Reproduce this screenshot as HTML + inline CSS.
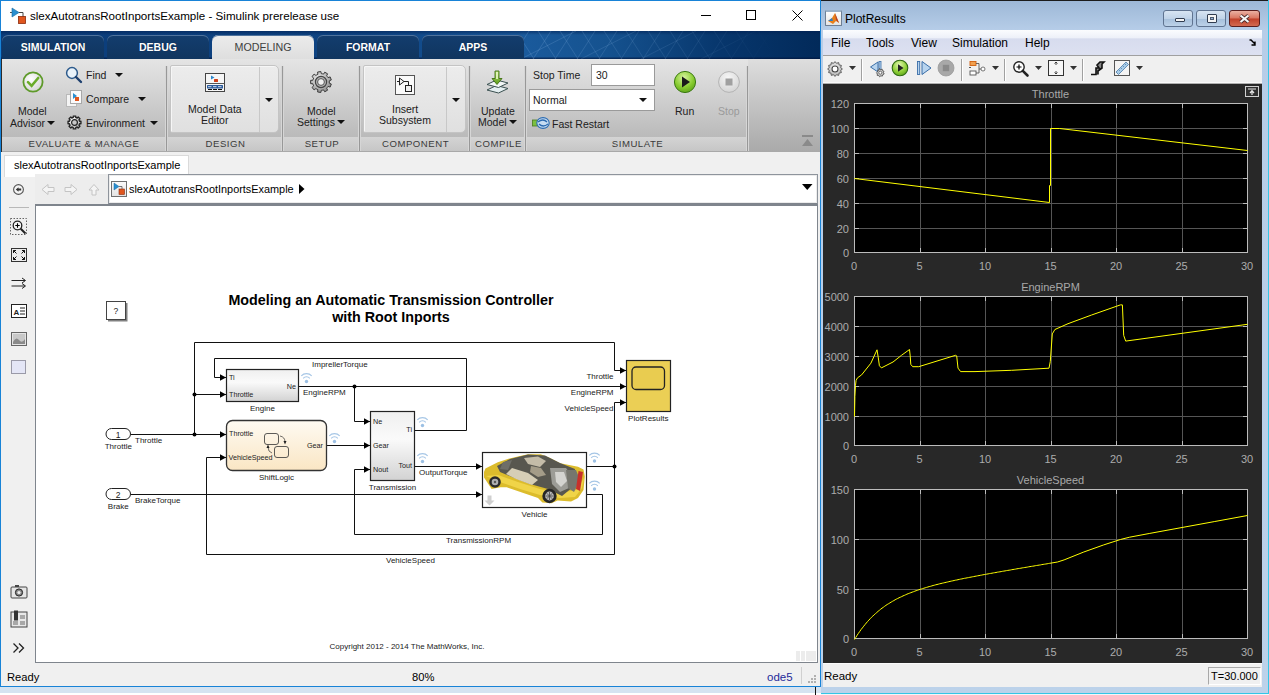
<!DOCTYPE html>
<html><head><meta charset="utf-8">
<style>
*{margin:0;padding:0;box-sizing:border-box}
html,body{width:1269px;height:695px;overflow:hidden;background:#fff;font-family:"Liberation Sans",sans-serif;color:#000}
.a{position:absolute}
#lw{position:absolute;left:0;top:0;width:821px;height:687px;border:1px solid #1883d7;background:#f0f0f0;overflow:hidden}
#rw{position:absolute;left:821px;top:0;width:448px;height:695px;overflow:hidden}
.tab{position:absolute;top:4px;width:102px;height:24px;border-radius:6px 6px 0 0;background:linear-gradient(#133d6e,#10355f);box-shadow:inset 0 1px 0 #4f729c;color:#fff;font-weight:bold;font-size:10.5px;text-align:center;line-height:25px;text-shadow:0 0 1px #0a2040}
.lbl{position:absolute;top:78px;height:13px;font-size:9.6px;letter-spacing:0.52px;color:#3a3a3a;text-align:center;line-height:13px}
.sep{position:absolute;top:7px;width:1px;height:85px;background:#989898;box-shadow:-1px 0 0 #d6d6d6,1px 0 0 #d6d6d6}
.t{position:absolute;font-size:10.5px;color:#202020;white-space:nowrap;line-height:12px}
.dd{display:inline-block;width:0;height:0;border-left:4px solid transparent;border-right:4px solid transparent;border-top:4px solid #111;vertical-align:middle}
svg text{font-family:"Liberation Sans",sans-serif}
</style></head><body>

<!-- ================= LEFT WINDOW ================= -->
<div id="lw">
  <!-- title bar -->
  <div class="a" style="left:0;top:0;width:819px;height:30px;background:#fff"></div>
  <svg class="a" style="left:8px;top:6px" width="18" height="18" viewBox="0 0 18 18">
    <path d="M1,5.5 H5" stroke="#555" stroke-width="1"/>
    <path d="M3,1 L3,10 L10,5.5 Z" fill="#2a8fd0" stroke="#1a6aa0" stroke-width="0.6"/>
    <path d="M10,5.5 H14 V10" stroke="#444" fill="none" stroke-width="1"/>
    <rect x="9.5" y="9.5" width="7" height="7" fill="#e0561e" stroke="#8a2a0a" stroke-width="0.8"/>
  </svg>
  <div class="a" style="left:29px;top:8px;font-size:11.6px;color:#000;white-space:nowrap">slexAutotransRootInportsExample - Simulink prerelease use</div>
  <!-- window buttons -->
  <div class="a" style="left:700px;top:14px;width:10px;height:1px;background:#000"></div>
  <div class="a" style="left:745px;top:9px;width:10px;height:10px;border:1px solid #000"></div>
  <svg class="a" style="left:791px;top:9px" width="11" height="11"><path d="M0.5,0.5 L10.5,10.5 M10.5,0.5 L0.5,10.5" stroke="#000" stroke-width="1"/></svg>

  <!-- ribbon tab band -->
  <div class="a" style="left:0;top:30px;width:819px;height:28px;background:linear-gradient(rgba(0,30,80,0.55),rgba(0,30,80,0) 4px,rgba(0,0,0,0) 26px,rgba(0,20,60,0.6) 27px),linear-gradient(90deg,#0b3c79 0%,#0e4483 45%,#1a5a9c 64%,#15528f 74%,#07366c 88%,#022a5a 100%)">
    <svg class="a" style="left:520px;top:0" width="300" height="28">
      <defs><linearGradient id="latf" x1="0" y1="0" x2="1" y2="0"><stop offset="0" stop-color="#9cc4ef" stop-opacity="0.22"/><stop offset="0.55" stop-color="#9cc4ef" stop-opacity="0.12"/><stop offset="0.85" stop-color="#9cc4ef" stop-opacity="0"/></linearGradient></defs>
      <path d="M-10,28 L8,0 M-5,0 L13,28 M12,28 L30,0 M17,0 L35,28 M34,28 L52,0 M39,0 L57,28 M56,28 L74,0 M61,0 L79,28 M78,28 L96,0 M83,0 L101,28 M100,28 L118,0 M105,0 L123,28 M122,28 L140,0 M127,0 L145,28 M144,28 L162,0 M149,0 L167,28 M166,28 L184,0 M171,0 L189,28 M188,28 L206,0 M193,0 L211,28 M210,28 L228,0 M215,0 L233,28 M232,28 L250,0 M237,0 L255,28 M254,28 L272,0 M259,0 L277,28 M276,28 L294,0 M281,0 L299,28 M0,28 L55,0 M60,28 L115,0 M120,28 L175,0 M180,28 L235,0 M240,28 L295,0" stroke="url(#latf)" stroke-width="0.9" fill="none"/>
    </svg>
    <div class="tab" style="left:1px">SIMULATION</div>
    <div class="tab" style="left:106px">DEBUG</div>
    <div class="tab" style="left:211px;background:linear-gradient(#ececec,#dedede);border-color:#e8e8e8;color:#404040;font-weight:normal;text-shadow:none;font-size:10.7px">MODELING</div>
    <div class="tab" style="left:316px">FORMAT</div>
    <div class="tab" style="left:421px">APPS</div>
  </div>

  <!-- toolstrip -->
  <div class="a" id="ts" style="left:0;top:58px;width:819px;height:93px;background:linear-gradient(#e4e4e4,#d6d6d6 30%,#bababa 84%,#b4b4b4)">
    <!-- label band -->
    <div class="a" style="left:0;top:78px;width:746px;height:14px;background:linear-gradient(#d4d4d4,#c6c6c6)"></div>
    <div class="a" style="left:747px;top:0;width:72px;height:92px;background:linear-gradient(#dedede,#cbcbcb 35%,#b4b4b4 80%,#aaaaaa)"></div>
    <div class="a" style="left:0;top:92px;width:819px;height:1px;background:#a9a9a9"></div>
    <div class="sep" style="left:165px"></div>
    <div class="sep" style="left:281px"></div>
    <div class="sep" style="left:358px"></div>
    <div class="sep" style="left:468px"></div>
    <div class="sep" style="left:524px"></div>
    <div class="sep" style="left:746px"></div>
    <div class="lbl" style="left:0;width:166px">EVALUATE &amp; MANAGE</div>
    <div class="lbl" style="left:167px;width:115px">DESIGN</div>
    <div class="lbl" style="left:283px;width:76px">SETUP</div>
    <div class="lbl" style="left:360px;width:109px">COMPONENT</div>
    <div class="lbl" style="left:470px;width:55px">COMPILE</div>
    <div class="lbl" style="left:526px;width:221px">SIMULATE</div>
    <div class="a" style="left:-1px;top:-59px;width:821px;height:160px">
  <!-- Model Advisor -->
  <svg class="a" style="left:21px;top:70px" width="24" height="24" viewBox="0 0 24 24">
    <defs><radialGradient id="gChk" cx="0.4" cy="0.35" r="0.7"><stop offset="0" stop-color="#ffffff"/><stop offset="1" stop-color="#d4d4d4"/></radialGradient></defs>
    <circle cx="12" cy="12" r="9.6" fill="url(#gChk)" stroke="#5e9a2a" stroke-width="1.8"/>
    <path d="M7,12.2 L10.6,15.8 L17.2,8" stroke="#6aac2a" stroke-width="2.6" fill="none" stroke-linecap="round"/>
  </svg>
  <div class="t" style="left:18px;top:105px">Model</div>
  <div class="t" style="left:10px;top:117px">Advisor</div>
  <div class="a dd" style="left:47px;top:121px"></div>
  <!-- Find -->
  <svg class="a" style="left:65px;top:66px" width="18" height="18" viewBox="0 0 18 18">
    <circle cx="7" cy="7" r="5.4" fill="#e9f2fa" stroke="#2c5a8c" stroke-width="1.5"/>
    <path d="M11,11 L16,16" stroke="#1d3f6e" stroke-width="2.4" stroke-linecap="round"/>
  </svg>
  <div class="t" style="left:86px;top:69px">Find</div>
  <div class="a dd" style="left:115px;top:73px"></div>
  <!-- Compare -->
  <svg class="a" style="left:66px;top:90px" width="18" height="18" viewBox="0 0 18 18">
    <rect x="0.5" y="4.5" width="10" height="12" fill="#f4f4f4" stroke="#b9b9b9"/>
    <rect x="4.5" y="0.5" width="11" height="13" fill="#fafafa" stroke="#a8a8a8"/>
    <path d="M7,3 L7,9 L11,6 Z" fill="#2a8fd0"/><rect x="9" y="7" width="4" height="4" fill="#e0561e"/>
  </svg>
  <div class="t" style="left:86px;top:93px">Compare</div>
  <div class="a dd" style="left:138px;top:97px"></div>
  <!-- Environment -->
  <svg class="a" style="left:66.5px;top:115px" width="15" height="15" viewBox="0 0 15 15">
    <defs><radialGradient id="gEnv" cx="0.35" cy="0.3" r="0.8"><stop offset="0" stop-color="#ffffff"/><stop offset="1" stop-color="#a8a8a8"/></radialGradient></defs>
    <path d="M6.25,2.45 L6.21,1.03 L8.79,1.03 L8.75,2.45 L10.18,3.05 L11.17,2.01 L12.99,3.83 L11.95,4.82 L12.55,6.25 L13.97,6.21 L13.97,8.79 L12.55,8.75 L11.95,10.18 L12.99,11.17 L11.17,12.99 L10.18,11.95 L8.75,12.55 L8.79,13.97 L6.21,13.97 L6.25,12.55 L4.82,11.95 L3.83,12.99 L2.01,11.17 L3.05,10.18 L2.45,8.75 L1.03,8.79 L1.03,6.21 L2.45,6.25 L3.05,4.82 L2.01,3.83 L3.83,2.01 L4.82,3.05 Z" fill="url(#gEnv)" stroke="#222" stroke-width="1.3" stroke-linejoin="round"/>
    <circle cx="7.5" cy="7.5" r="2.9" fill="#c8c8c8" stroke="#222" stroke-width="1.2"/>
  </svg>
  <div class="t" style="left:86px;top:117px">Environment</div>
  <div class="a dd" style="left:150px;top:121px"></div>

  <!-- Model Data Editor -->
  <div class="a" style="left:170px;top:65px;width:109px;height:68px;border:1px solid #c4c4c4;border-radius:2px 5px 5px 2px;background:linear-gradient(#ececec,#e0e0e0);box-shadow:inset 1px 1px 0 #f6f6f6"></div>
  <div class="a" style="left:259px;top:67px;width:1px;height:65px;background:#c8c8c8"></div>
  <svg class="a" style="left:204px;top:72px" width="22" height="22" viewBox="204 72 22 22">
    <rect x="205.5" y="73.5" width="19" height="18" fill="#f6f6f6" stroke="#444" stroke-width="1"/>
    <path d="M205.5,83.5 H224.5" stroke="#555" stroke-width="1"/>
    <path d="M211,75.5 L211,79.5 L214.5,77.5 Z" fill="#2a86cc"/>
    <rect x="214" y="79" width="4" height="3" rx="0.5" fill="#d04018"/>
    <rect x="207" y="85" width="16" height="3.5" rx="0.6" fill="#2a5a9a"/>
    <path d="M208,86.7 H211.5 M213,86.7 H216.5 M218,86.7 H221.5" stroke="#e8eef8" stroke-width="0.9"/>
    <path d="M208,89.5 H212 M213,89.5 H217 M218,89.5 H222" stroke="#111" stroke-width="1"/>
  </svg>
  <div class="t" style="left:188px;top:103px">Model Data</div>
  <div class="t" style="left:201px;top:114px">Editor</div>
  <div class="a dd" style="left:265px;top:98px"></div>

  <!-- Model Settings -->
  <svg class="a" style="left:310px;top:71px" width="22" height="22" viewBox="0 0 22 22">
    <defs><radialGradient id="gGear" cx="0.4" cy="0.35" r="0.7"><stop offset="0" stop-color="#f2f2f2"/><stop offset="1" stop-color="#8a8a8a"/></radialGradient></defs>
    <path d="M19.30,11.00 L19.22,12.13 L21.31,13.00 L20.18,16.09 L18.02,15.42 L17.36,16.34 L16.58,17.15 L17.61,19.16 L14.76,20.80 L13.54,18.90 L12.44,19.17 L11.32,19.29 L10.82,21.50 L7.58,20.93 L7.86,18.68 L6.85,18.19 L5.91,17.56 L4.11,18.92 L2.00,16.41 L3.66,14.87 L3.20,13.84 L2.89,12.75 L0.63,12.64 L0.63,9.36 L2.89,9.25 L3.20,8.16 L3.66,7.13 L2.00,5.59 L4.11,3.08 L5.91,4.44 L6.85,3.81 L7.86,3.32 L7.58,1.07 L10.82,0.50 L11.32,2.71 L12.44,2.83 L13.54,3.10 L14.76,1.20 L17.61,2.84 L16.58,4.85 L17.36,5.66 L18.02,6.58 L20.18,5.91 L21.31,9.00 L19.22,9.87 Z" fill="url(#gGear)" stroke="#3c3c3c" stroke-width="1"/>
    <circle cx="11" cy="11" r="5.6" fill="#b0b0b0" stroke="#444" stroke-width="1.2"/>
    <circle cx="11" cy="11" r="3.4" fill="#f0f0f0" stroke="#555" stroke-width="1"/>
  </svg>
  <div class="t" style="left:307px;top:105px">Model</div>
  <div class="t" style="left:297px;top:116px">Settings</div>
  <div class="a dd" style="left:337px;top:120px"></div>

  <!-- Insert Subsystem -->
  <div class="a" style="left:363px;top:65px;width:103px;height:68px;border:1px solid #c4c4c4;border-radius:2px 5px 5px 2px;background:linear-gradient(#ececec,#e0e0e0);box-shadow:inset 1px 1px 0 #f6f6f6"></div>
  <div class="a" style="left:446px;top:67px;width:1px;height:65px;background:#c8c8c8"></div>
  <svg class="a" style="left:394px;top:74px" width="22" height="22" viewBox="394 74 22 22">
    <rect x="395.5" y="75.5" width="19" height="19" fill="#fafafa" stroke="#555" stroke-width="1"/>
    <path d="M397,81.5 H399.5 M399.5,78 L399.5,85 L404,81.5 Z M404,81.5 H408.5 V85.5" fill="#f4f4f4" stroke="#222" stroke-width="1"/>
    <rect x="405.5" y="85.5" width="6" height="6" fill="#eeeeee" stroke="#222" stroke-width="1"/>
  </svg>
  <div class="t" style="left:392px;top:103px">Insert</div>
  <div class="t" style="left:379px;top:114px">Subsystem</div>
  <div class="a dd" style="left:452px;top:98px"></div>

  <!-- Update Model -->
  <svg class="a" style="left:484px;top:68px" width="28" height="28" viewBox="484 68 28 28">
    <defs><linearGradient id="gArr" x1="0" y1="0" x2="1" y2="0"><stop offset="0" stop-color="#6aa820"/><stop offset="0.5" stop-color="#e6f6b8"/><stop offset="1" stop-color="#6aa820"/></linearGradient>
    <linearGradient id="gArr2" x1="0" y1="0" x2="0" y2="1"><stop offset="0" stop-color="#b8e070"/><stop offset="1" stop-color="#5a9a18"/></linearGradient></defs>
    <path d="M487,90 L496.5,85.5 L508,88.5 L498.5,93 Z" fill="#e4eef0" stroke="#3a5050" stroke-width="1"/>
    <path d="M487,84.5 L496.5,80 L508,83 L498.5,87.5 Z" fill="#f2f6f6" stroke="#3a5050" stroke-width="1"/>
    <path d="M495,71 H499 V78.5 H502 L497,84.5 L492,78.5 H495 Z" fill="url(#gArr2)" stroke="#3e6e12" stroke-width="0.9"/>
    <rect x="496" y="72" width="2" height="7" fill="#eaf8c8" opacity="0.85"/>
  </svg>
  <div class="t" style="left:481px;top:105px">Update</div>
  <div class="t" style="left:478px;top:116px">Model</div>
  <div class="a dd" style="left:509px;top:120px"></div>

  <!-- Stop time etc -->
  <div class="t" style="left:533px;top:69px">Stop Time</div>
  <div class="a" style="left:591px;top:64px;width:64px;height:22px;background:#fff;border:1px solid #9a9a9a"></div>
  <div class="t" style="left:596px;top:69px">30</div>
  <div class="a" style="left:529px;top:89px;width:126px;height:22px;background:#fff;border:1px solid #9a9a9a"></div>
  <div class="t" style="left:533px;top:94px">Normal</div>
  <div class="a dd" style="left:639px;top:98px"></div>
  <svg class="a" style="left:532px;top:116px" width="18" height="15" viewBox="0 0 18 15">
    <rect x="0.5" y="4" width="5" height="6" fill="#7cc040" stroke="#4a7a20" stroke-width="0.8"/>
    <ellipse cx="11" cy="7" rx="6.2" ry="5.4" fill="#c6dcf2" stroke="#2a6ab0" stroke-width="1.1"/>
    <path d="M6,6 Q11,2 15,6 M16,8 Q11,12 7,8" stroke="#2a6ab0" stroke-width="1.2" fill="none"/>
  </svg>
  <div class="t" style="left:552px;top:118px">Fast Restart</div>

  <!-- Run / Stop -->
  <svg class="a" style="left:673px;top:70px" width="24" height="24" viewBox="0 0 24 24">
    <defs><radialGradient id="gRun" cx="0.45" cy="0.3" r="0.75"><stop offset="0" stop-color="#d8f4a0"/><stop offset="0.6" stop-color="#88cc30"/><stop offset="1" stop-color="#5aa018"/></radialGradient></defs>
    <circle cx="12" cy="12" r="10.6" fill="url(#gRun)" stroke="#3c7a14" stroke-width="1"/>
    <path d="M9,6.5 L17,12 L9,17.5 Z" fill="#1a1a1a"/>
  </svg>
  <div class="t" style="left:675px;top:105px">Run</div>
  <svg class="a" style="left:717px;top:70px" width="24" height="24" viewBox="0 0 24 24">
    <defs><radialGradient id="gStop" cx="0.45" cy="0.3" r="0.75"><stop offset="0" stop-color="#f6f6f6"/><stop offset="1" stop-color="#d2d2d2"/></radialGradient></defs>
    <circle cx="12" cy="12" r="10.4" fill="url(#gStop)" stroke="#b4b4b4" stroke-width="1"/>
    <rect x="8.5" y="8.5" width="7" height="7" fill="#a0a0a0"/>
  </svg>
  <div class="t" style="left:718px;top:105px;color:#9a9a9a">Stop</div>
  <!-- collapse -->
  <svg class="a" style="left:802px;top:135px" width="12" height="12"><rect x="0" y="0" width="11" height="2" fill="#8a8a8a"/><path d="M0,11 L5.5,4 L11,11 Z" fill="#8a8a8a"/></svg>
</div>

  </div>

  <div class="a" style="left:0;top:58px;width:1px;height:93px;background:#2a2a2a"></div>
  <!-- model tab row -->
  <div class="a" style="left:3px;top:154px;width:185px;height:22px;background:#fff;border:1px solid #dadada;border-bottom:none"></div>
  <div class="a" style="left:13px;top:158px;font-size:11px;color:#000;white-space:nowrap">slexAutotransRootInportsExample</div>

  <!-- nav / address bar -->
  <div class="a" style="left:107px;top:173px;width:710px;height:31px;background:#fff;border:1px solid #8e949c;border-bottom:2px solid #7e848c;box-shadow:inset 0 0 0 1px #ececec"></div>
  <div class="a" style="left:-1px;top:-1px;width:821px;height:687px">
  <!-- left sidebar line under back button -->
  <div class="a" style="left:35px;top:174px;width:73px;height:30px;background:#ededed"></div>
  <svg class="a" style="left:11px;top:182px" width="15" height="15" viewBox="0 0 15 15">
    <circle cx="7.5" cy="7.5" r="4.9" fill="#f4f4f4" stroke="#555" stroke-width="1.1"/>
    <path d="M4.8,7.5 L7.5,5.2 L7.5,6.6 L10.2,6.6 L10.2,8.4 L7.5,8.4 L7.5,9.8 Z" fill="#333"/>
  </svg>
  <div class="a" style="left:9px;top:207px;width:20px;height:1px;background:#b8b8b8"></div>
  <!-- nav arrows (disabled) -->
  <svg class="a" style="left:40px;top:183px" width="64" height="13" viewBox="0 0 64 13">
    <path d="M2,6.5 L8,1.5 L8,4.5 L14,4.5 L14,8.5 L8,8.5 L8,11.5 Z" fill="#f4f4f4" stroke="#c4c4c4" stroke-width="1"/>
    <path d="M37,6.5 L31,1.5 L31,4.5 L25,4.5 L25,8.5 L31,8.5 L31,11.5 Z" fill="#f4f4f4" stroke="#c4c4c4" stroke-width="1"/>
    <path d="M54,1.5 L59,7 L56,7 L56,12 L52,12 L52,7 L49,7 Z" fill="#f4f4f4" stroke="#c4c4c4" stroke-width="1"/>
  </svg>
  <!-- address -->
  <div class="a" style="left:111px;top:181px;width:16px;height:16px;border:1px solid #707070;background:linear-gradient(#fafafa,#e4e4e4)"></div>
  <svg class="a" style="left:112px;top:182px" width="14" height="14" viewBox="0 0 14 14"><path d="M2,1 L2,8 L7,4.5 Z" fill="#2a8fd0" stroke="#1a6aa0" stroke-width="0.5"/><path d="M7,4.5 H10 V7" stroke="#555" stroke-width="0.8" fill="none"/><rect x="7" y="7" width="5.5" height="5.5" fill="#e0561e" stroke="#8a2a0a" stroke-width="0.6"/></svg>
  <div class="a" style="left:129px;top:183px;font-size:10.9px;white-space:nowrap;color:#000">slexAutotransRootInportsExample</div>
  <svg class="a" style="left:299px;top:184px" width="6" height="10"><path d="M0,0 L5.5,5 L0,10 Z" fill="#000"/></svg>
  <svg class="a" style="left:802px;top:184px" width="11" height="7"><path d="M0,0 L10.5,0 L5.25,6 Z" fill="#000"/></svg>

  <!-- sidebar tools -->
  <svg class="a" style="left:10px;top:218px" width="18" height="18" viewBox="0 0 18 18">
    <rect x="0.5" y="0.5" width="16" height="16" fill="none" stroke="#555" stroke-dasharray="1.5,1.5" stroke-width="0.9"/>
    <circle cx="7.5" cy="7.5" r="4.3" fill="#f6f6f6" stroke="#222" stroke-width="1.3"/>
    <path d="M5.3,7.5 H9.7 M7.5,5.3 V9.7" stroke="#000" stroke-width="1.1"/>
    <path d="M10.7,10.7 L15.5,15.5" stroke="#222" stroke-width="2"/>
  </svg>
  <svg class="a" style="left:10px;top:247px" width="18" height="16" viewBox="0 0 18 16">
    <rect x="1.5" y="1.5" width="15" height="13" fill="#ececec" stroke="#333" stroke-width="1"/>
    <path d="M3.5,3.5 L6.5,6.5 M3.5,3.5 H6 M3.5,3.5 V6 M14.5,3.5 L11.5,6.5 M14.5,3.5 H12 M14.5,3.5 V6 M3.5,12.5 L6.5,9.5 M3.5,12.5 H6 M3.5,12.5 V10 M14.5,12.5 L11.5,9.5 M14.5,12.5 H12 M14.5,12.5 V10" stroke="#111" stroke-width="1" fill="none"/>
  </svg>
  <svg class="a" style="left:10px;top:277px" width="18" height="12" viewBox="0 0 18 12">
    <path d="M1.5,3.5 H15 M12,1 L15.5,3.5 L12,6 M1.5,9 H15 M12,6.5 L15.5,9 L12,11.5" stroke="#222" stroke-width="1" fill="none"/>
  </svg>
  <svg class="a" style="left:11px;top:304px" width="16" height="14" viewBox="0 0 16 14">
    <rect x="0.5" y="0.5" width="15" height="13" fill="#fff" stroke="#222"/>
    <text x="2.5" y="10.5" font-size="8" font-weight="bold" fill="#222">A</text>
    <path d="M9,4 H14 M9,7 H14 M9,10 H14" stroke="#222" stroke-width="1"/>
  </svg>
  <svg class="a" style="left:11px;top:332px" width="16" height="14" viewBox="0 0 16 14">
    <rect x="0.5" y="0.5" width="15" height="13" fill="#e4e4e4" stroke="#666"/>
    <rect x="2" y="2" width="12" height="10" fill="#c8c8c8"/>
    <path d="M2,10 Q5,4 8,8 T14,7 V12 H2 Z" fill="#8a8a8a"/>
  </svg>
  <div class="a" style="left:11px;top:360px;width:15px;height:14px;background:#e4e6f6;border:1px solid #9a9aa8"></div>
  <!-- bottom sidebar tools -->
  <svg class="a" style="left:10px;top:584px" width="18" height="15" viewBox="0 0 18 15">
    <rect x="1" y="3" width="16" height="11" rx="1" fill="#e6e6e6" stroke="#444" stroke-width="1"/>
    <rect x="5" y="1" width="4" height="2" fill="#444"/>
    <circle cx="9" cy="8.5" r="3.6" fill="#888" stroke="#222" stroke-width="1"/>
    <circle cx="9" cy="8.5" r="1.6" fill="#eee"/>
  </svg>
  <svg class="a" style="left:10px;top:610px" width="18" height="18" viewBox="0 0 18 18">
    <rect x="1" y="2" width="16" height="15" fill="#e8e8e8" stroke="#444" stroke-width="1"/>
    <rect x="4" y="0.5" width="4" height="10" fill="#333"/>
    <rect x="3" y="11" width="5" height="4" fill="#a8a8a8"/><rect x="10" y="5" width="5" height="4" fill="#a8a8a8"/><rect x="10" y="11" width="5" height="4" fill="#a8a8a8"/>
  </svg>
  <svg class="a" style="left:12px;top:642px" width="14" height="12" viewBox="0 0 14 12">
    <path d="M1.5,1.5 L6,6 L1.5,10.5 M7,1.5 L11.5,6 L7,10.5" stroke="#222" stroke-width="1.3" fill="none"/>
  </svg>
  <!-- status grip -->
  <svg class="a" style="left:808px;top:675px" width="10" height="10"><g fill="#b0b0b0"><rect x="6" y="0" width="2" height="2"/><rect x="3" y="3" width="2" height="2"/><rect x="6" y="3" width="2" height="2"/><rect x="0" y="6" width="2" height="2"/><rect x="3" y="6" width="2" height="2"/><rect x="6" y="6" width="2" height="2"/></g></svg>
</div>


  <!-- canvas -->
  <div class="a" style="left:34px;top:203px;width:783px;height:459px;background:#fff;border:1px solid #7f858d;border-top:2px solid #7f858d"></div>
  <svg class="a" style="left:-1px;top:-1px" width="821" height="687" viewBox="0 0 821 687" font-size="8" fill="#222">
<defs>
  <linearGradient id="gEng" x1="0" y1="0" x2="0" y2="1"><stop offset="0" stop-color="#efefef"/><stop offset="0.4" stop-color="#fafafa"/><stop offset="1" stop-color="#d2d2d2"/></linearGradient>
  <linearGradient id="gSL" x1="0" y1="0" x2="0" y2="1"><stop offset="0" stop-color="#fefaf2"/><stop offset="1" stop-color="#fae6c4"/></linearGradient>
  <marker id="ar" markerWidth="8" markerHeight="8" refX="6.5" refY="3.5" orient="auto" markerUnits="userSpaceOnUse"><path d="M0.5,0.3 L6.5,3.5 L0.5,6.7 Z" fill="#000"/></marker>
  
</defs>
<!-- title -->
<text x="391" y="305" font-size="14.3" font-weight="bold" text-anchor="middle" fill="#000">Modeling an Automatic Transmission Controller</text>
<text x="391" y="322" font-size="14.3" font-weight="bold" text-anchor="middle" fill="#000">with Root Inports</text>
<!-- ? block -->
<rect x="108" y="303" width="19.5" height="18.5" fill="#555" opacity="0.75"/>
<rect x="106.5" y="301.5" width="19" height="18" fill="#fff" stroke="#444" stroke-width="1"/>
<text x="115.8" y="314" font-size="8.5" text-anchor="middle" fill="#222">?</text>

<g stroke="#111" stroke-width="1" fill="none">
  <!-- outer loop: throttle to plot -->
  <polyline points="194.5,434.5 194.5,342.5 614.5,342.5 614.5,370.5 626,370.5" marker-end="url(#ar)"/>
  <!-- engine throttle input -->
  <polyline points="194.5,394.5 226,394.5" marker-end="url(#ar)"/>
  <!-- impeller torque loop -->
  <polyline points="414.5,430.5 466.5,430.5 466.5,358.5 214.5,358.5 214.5,377.5 226,377.5" marker-end="url(#ar)"/>
  <!-- engine rpm -->
  <polyline points="298.5,386.5 626,386.5" marker-end="url(#ar)"/>
  <polyline points="354.5,386.5 354.5,421.5 370,421.5" marker-end="url(#ar)"/>
  <!-- throttle inport -->
  <polyline points="130.5,434.5 226,434.5" marker-end="url(#ar)"/>
  <!-- gear -->
  <polyline points="326.5,445.5 370,445.5" marker-end="url(#ar)"/>
  <!-- tout -->
  <polyline points="414.5,466.5 482,466.5" marker-end="url(#ar)"/>
  <!-- brake -->
  <polyline points="130.5,494.5 482,494.5" marker-end="url(#ar)"/>
  <!-- vehicle speed -->
  <polyline points="586.5,466.5 614.5,466.5"/>
  <polyline points="614.5,466.5 614.5,554.5 206.5,554.5 206.5,457.5 226,457.5" marker-end="url(#ar)"/>
  <polyline points="614.5,466.5 614.5,402.5 626,402.5" marker-end="url(#ar)"/>
  <!-- transmission rpm -->
  <polyline points="586.5,494.5 602.5,494.5 602.5,534.5 354.5,534.5 354.5,469.5 370,469.5" marker-end="url(#ar)"/>
</g>
<g fill="#000">
  <circle cx="194.5" cy="394.5" r="2"/><circle cx="194.5" cy="434.5" r="2"/>
  <circle cx="354.5" cy="386.5" r="2"/><circle cx="614.5" cy="466.5" r="2"/>
</g>

<!-- Engine -->
<rect x="226.5" y="369.5" width="72" height="32" fill="url(#gEng)" stroke="#222" stroke-width="1.2"/>
<g font-size="7.2" fill="#222">
<text x="229" y="380">Ti</text><text x="229" y="396.5">Throttle</text><text x="296" y="388.5" text-anchor="end">Ne</text>
</g>
<text x="262.5" y="411" text-anchor="middle">Engine</text>
<g transform="translate(306.5,381.5)"><path d="M-5.2,-5.6 A7,7 0 0 1 5.2,-5.6 M-3.3,-3.2 A4.4,4.4 0 0 1 3.3,-3.2" stroke="#a6c6e6" stroke-width="1.1" fill="none"/><circle cx="0" cy="0" r="1.7" fill="#9cc0e4"/></g>
<text x="303" y="395">EngineRPM</text>
<text x="312" y="367">ImprellerTorque</text>

<!-- Inports -->
<rect x="106" y="428.5" width="24.5" height="11" rx="5.5" fill="#fff" stroke="#222" stroke-width="1"/>
<text x="118.2" y="437.5" text-anchor="middle" font-size="8.5">1</text>
<text x="118.3" y="449" text-anchor="middle">Throttle</text>
<text x="135" y="443">Throttle</text>
<rect x="106" y="488.5" width="24.5" height="11" rx="5.5" fill="#fff" stroke="#222" stroke-width="1"/>
<text x="118.2" y="497.5" text-anchor="middle" font-size="8.5">2</text>
<text x="118.3" y="509" text-anchor="middle">Brake</text>
<text x="135" y="503">BrakeTorque</text>

<!-- ShiftLogic -->
<rect x="226.5" y="420.5" width="100" height="50" rx="6" fill="url(#gSL)" stroke="#333" stroke-width="1.3"/>
<g font-size="7.2" fill="#222">
<text x="229" y="435.5">Throttle</text><text x="228.5" y="459.5">VehicleSpeed</text><text x="323" y="447.5" text-anchor="end">Gear</text>
</g>
<rect x="264.5" y="433.5" width="14" height="11" rx="2.5" fill="none" stroke="#333" stroke-width="0.8"/>
<rect x="274.5" y="446.5" width="14" height="11" rx="2.5" fill="none" stroke="#333" stroke-width="0.8"/>
<path d="M280,436 Q285,437 285,442 M272,453 Q268,452 268,447" stroke="#333" stroke-width="0.7" fill="none"/>
<path d="M283.5,441 L286.5,441 L285,444.5 Z M266.5,448 L269.5,448 L268,444.5 Z" fill="#222"/>
<text x="276.5" y="480" text-anchor="middle">ShiftLogic</text>
<g transform="translate(334.5,441.5)"><path d="M-5.2,-5.6 A7,7 0 0 1 5.2,-5.6 M-3.3,-3.2 A4.4,4.4 0 0 1 3.3,-3.2" stroke="#a6c6e6" stroke-width="1.1" fill="none"/><circle cx="0" cy="0" r="1.7" fill="#9cc0e4"/></g>

<!-- Transmission -->
<rect x="370.5" y="411.5" width="44" height="69" fill="url(#gEng)" stroke="#222" stroke-width="1.2"/>
<g font-size="7.2" fill="#222">
<text x="373" y="423.5">Ne</text><text x="373" y="447.5">Gear</text><text x="373" y="471.5">Nout</text>
<text x="412" y="432" text-anchor="end">Ti</text><text x="412" y="468" text-anchor="end">Tout</text>
</g>
<text x="392.5" y="490" text-anchor="middle">Transmission</text>
<g transform="translate(422.5,425.5)"><path d="M-5.2,-5.6 A7,7 0 0 1 5.2,-5.6 M-3.3,-3.2 A4.4,4.4 0 0 1 3.3,-3.2" stroke="#a6c6e6" stroke-width="1.1" fill="none"/><circle cx="0" cy="0" r="1.7" fill="#9cc0e4"/></g>
<g transform="translate(422.5,461.5)"><path d="M-5.2,-5.6 A7,7 0 0 1 5.2,-5.6 M-3.3,-3.2 A4.4,4.4 0 0 1 3.3,-3.2" stroke="#a6c6e6" stroke-width="1.1" fill="none"/><circle cx="0" cy="0" r="1.7" fill="#9cc0e4"/></g>
<text x="419" y="475">OutputTorque</text>

<!-- Vehicle -->
<rect x="482.5" y="452.5" width="104" height="55" fill="#fff" stroke="#222" stroke-width="1.2"/>
<g>
  <!-- silhouette (yellow) -->
  <path d="M484,472 L485.4,468.5 L497.8,462.3 L508.5,458.7 L520,456 L528,454.2 L540.7,454.2 L549.6,457.8 L560.3,463.2 L578,466.7 L583.5,469.4 L584.8,476.5 L583.5,490 L578,498 L571,501.5 L557.6,500.6 L551.4,503.3 L542.4,502.4 L538,498 L506.8,487.3 L500.5,487.3 L491.6,489 L487,482 L484,477.4 Z" fill="#dcbc2c"/>
  <path d="M486,476 L500,482 L520,489 L540,495 L560,498 L575,497 L582,488 L584,478 L576,490 L560,493 L540,489 L518,482 L498,475 Z" fill="#f0d448"/>
  <!-- dark interior / mechanics -->
  <path d="M497,466 L510,459 L528,454.5 L545,455.5 L560,463 L575,469 L573,487 L562,496 L548,489 L530,484 L512,477 L500,472 Z" fill="#58574f"/>
  <path d="M512,468 L528,473 L538,480 L532,485 L516,479 L506,474 Z" fill="#d6ceb6"/>
  <path d="M524,458 L538,456.5 L546,461 L540,467 L528,464 Z" fill="#c4bca8"/>
  <path d="M531,466 L541,468 L546,475 L538,477 L530,472 Z" fill="#a49c88"/>
  <path d="M550,468 L566,468 L572,476 L569,488 L560,492 L552,484 Z" fill="#9c9c96"/>
  <path d="M555,472 L564,472 L567,481 L561,487 L556,482 Z" fill="#d4d4d0"/>
  <path d="M566,470 L576,470 L580,480 L574,492 L568,488 Z" fill="#76766e"/>
  <path d="M503,462 L512,460 L508,470 L500,469 Z" fill="#6e6e68"/>
  <path d="M578.5,471 L583,472 L580,491 L576,489 Z" fill="#c8302a"/>
  <!-- wheels -->
  <circle cx="495" cy="482" r="5.8" fill="#2a2a2a"/><circle cx="495" cy="482" r="3.3" fill="#b0b0b0"/><circle cx="495" cy="482" r="1.2" fill="#555"/>
  <circle cx="549.5" cy="496" r="7.2" fill="#262626"/><circle cx="549.5" cy="496" r="4.4" fill="#b8b8b8"/><path d="M545.5,496 H553.5 M549.5,492 V500 M546.7,493.2 L552.3,498.8 M552.3,493.2 L546.7,498.8" stroke="#444" stroke-width="0.8"/>
</g>
<path d="M487.5,495.5 H491.5 V500.5 H494.5 L489.5,505.5 L484.5,500.5 H487.5 Z" fill="#cfcfcf"/>

<text x="534.5" y="517" text-anchor="middle">Vehicle</text>
<g transform="translate(594.5,461)"><path d="M-5.2,-5.6 A7,7 0 0 1 5.2,-5.6 M-3.3,-3.2 A4.4,4.4 0 0 1 3.3,-3.2" stroke="#a6c6e6" stroke-width="1.1" fill="none"/><circle cx="0" cy="0" r="1.7" fill="#9cc0e4"/></g>
<g transform="translate(594.5,489)"><path d="M-5.2,-5.6 A7,7 0 0 1 5.2,-5.6 M-3.3,-3.2 A4.4,4.4 0 0 1 3.3,-3.2" stroke="#a6c6e6" stroke-width="1.1" fill="none"/><circle cx="0" cy="0" r="1.7" fill="#9cc0e4"/></g>
<text x="446" y="543">TransmissionRPM</text>
<text x="386" y="563">VehicleSpeed</text>

<!-- PlotResults -->
<rect x="626.5" y="360.5" width="44" height="51" fill="#ebcf55" stroke="#222" stroke-width="1.2"/>
<rect x="632" y="367" width="32.5" height="22.5" rx="4" fill="#e9cc50" stroke="#222" stroke-width="1.3"/>
<text x="613.5" y="379" text-anchor="end">Throttle</text>
<text x="613.5" y="395" text-anchor="end">EngineRPM</text>
<text x="613.5" y="411" text-anchor="end">VehicleSpeed</text>
<text x="648.3" y="421" text-anchor="middle">PlotResults</text>

<text x="407" y="649" text-anchor="middle" fill="#222">Copyright 2012 - 2014 The MathWorks, Inc.</text>
<rect x="796" y="651" width="4" height="10" fill="#ececec"/><rect x="801" y="651" width="4" height="10" fill="#ececec"/><rect x="806" y="651" width="10" height="10" fill="#ececec"/>
</svg>


  <!-- status bar -->
  <div class="a" style="left:6px;top:670px;font-size:11.2px;color:#000">Ready</div>
  <div class="a" style="left:411px;top:670px;font-size:11.2px;color:#000">80%</div>
  <div class="a" style="left:766px;top:670px;font-size:11.5px;color:#1f2a9a">ode5</div>
  <div class="a" style="left:800px;top:666px;width:1px;height:17px;background:#d0d0d0"></div>
</div>

<div class="a" style="left:0;top:687px;width:821px;height:6px;background:#d5e3f1"></div>
<div class="a" style="left:815px;top:687px;width:1px;height:8px;background:#111"></div>
<!-- ================= RIGHT WINDOW ================= -->
<div id="rw">
  <div class="a" style="left:0;top:0;width:448px;height:695px;background:linear-gradient(#9cb7d6,#b6cde8 30px,#bcd2ea 100%)"></div>
  <div class="a" style="left:0;top:0;width:448px;height:1px;background:#1b1b1b"></div>
  <div class="a" style="left:447px;top:0;width:1px;height:694px;background:#34c6e6"></div>
  <div class="a" style="left:0;top:693px;width:448px;height:1px;background:#34c6e6"></div>
  <div class="a" style="left:0;top:694px;width:448px;height:1px;background:#f4f6f9"></div>
  <!-- title -->
  <div class="a" style="left:4px;top:10px;width:17px;height:16px;background:linear-gradient(#fdfdfd,#e4e4e4);border:1px solid #6e7f94;border-top:2px solid #9ab0c8;border-radius:1px"></div>
  <svg class="a" style="left:6px;top:12px" width="13" height="13" viewBox="0 0 13 13"><path d="M1,9 L5,6 L8,1 L12,11 L9,9 L6,12 Z" fill="#e8801a"/><path d="M1,9 L5,6 L6,9 Z" fill="#2d7fc7"/><path d="M8,1 L12,11 L9,8 Z" fill="#b8402a"/></svg>
  <div class="a" style="left:24px;top:12px;font-size:12px;color:#000">PlotResults</div>
  <!-- title buttons -->
  <div class="a" style="left:342px;top:10px;width:30px;height:17px;border:1px solid #5f7390;border-radius:3px;background:linear-gradient(#d7e4f2,#c0d3e8 50%,#a6bfdb 52%,#bcd1e8)"></div>
  <div class="a" style="left:354px;top:18px;width:10px;height:4px;background:#f4f4f4;border:1px solid #303c50;border-radius:1px"></div>
  <div class="a" style="left:375px;top:10px;width:30px;height:17px;border:1px solid #5f7390;border-radius:3px;background:linear-gradient(#d7e4f2,#c0d3e8 50%,#a6bfdb 52%,#bcd1e8)"></div>
  <div class="a" style="left:386px;top:14px;width:10px;height:9px;background:#f4f4f4;border:1px solid #303c50;border-radius:1px"></div>
  <div class="a" style="left:389px;top:17px;width:4px;height:3px;background:#9ab3d3;border:1px solid #4b5a70"></div>
  <div class="a" style="left:408px;top:10px;width:31px;height:17px;border:1px solid #5a1e1e;border-radius:3px;background:linear-gradient(#eab0a2,#d97560 48%,#c0402a 52%,#d36a50)"></div>
  <svg class="a" style="left:416px;top:12px" width="15" height="13"><path d="M3.5,3.5 L11.5,10 M11.5,3.5 L3.5,10" stroke="#4a2a2a" stroke-width="3.8"/><path d="M3.5,3.5 L11.5,10 M11.5,3.5 L3.5,10" stroke="#f6f6f6" stroke-width="2.2"/></svg>
  <!-- menu bar -->
  <div class="a" style="left:2px;top:30px;width:439px;height:25px;background:linear-gradient(#fbfcfe,#eef1f9 30%,#d7dcee 36%,#dde1f1)"></div>
  <div class="a" style="left:2px;top:55px;width:439px;height:1px;background:#a0a0a0"></div>
  <div class="a" style="left:10px;top:36px;font-size:12px;color:#000">File</div>
  <div class="a" style="left:45px;top:36px;font-size:12px;color:#000">Tools</div>
  <div class="a" style="left:90px;top:36px;font-size:12px;color:#000">View</div>
  <div class="a" style="left:131px;top:36px;font-size:12px;color:#000">Simulation</div>
  <div class="a" style="left:204px;top:36px;font-size:12px;color:#000">Help</div>
  <svg class="a" style="left:428px;top:39px" width="8" height="8"><path d="M0.5,1 L2,1 L6,5 M6,2.5 L6,6 L2.5,6" stroke="#000" stroke-width="1.4" fill="none"/></svg>
  <!-- toolbar -->
  <div class="a" style="left:2px;top:56px;width:439px;height:27px;background:#f0f0f0"></div>
  <div class="a" style="left:2px;top:82px;width:439px;height:1px;background:#fafafa"></div><div class="a" style="left:2px;top:83px;width:439px;height:1px;background:#b0b0b0"></div>
  <div class="a" style="left:-821px;top:0;width:1269px;height:100px">
  <!-- gear -->
  <svg class="a" style="left:827px;top:61px" width="16" height="16" viewBox="0 0 16 16">
    <defs><radialGradient id="gG2" cx="0.5" cy="0.4" r="0.6"><stop offset="0" stop-color="#fafafa"/><stop offset="1" stop-color="#a8a8a8"/></radialGradient></defs>
    <path d="M8,0.6 L9.5,2.3 L11.7,1.6 L12.1,3.9 L14.4,4.4 L13.7,6.6 L15.4,8 L13.7,9.4 L14.4,11.6 L12.1,12.1 L11.7,14.4 L9.5,13.7 L8,15.4 L6.5,13.7 L4.3,14.4 L3.9,12.1 L1.6,11.6 L2.3,9.4 L0.6,8 L2.3,6.6 L1.6,4.4 L3.9,3.9 L4.3,1.6 L6.5,2.3 Z" fill="url(#gG2)" stroke="#555" stroke-width="0.9"/>
    <circle cx="8" cy="8" r="3" fill="#fff" stroke="#444" stroke-width="1.1"/>
  </svg>
  <svg class="a" style="left:849px;top:66px" width="7" height="4"><path d="M0,0 H7 L3.5,4 Z" fill="#333"/></svg>
  <div class="a" style="left:861px;top:59px;width:1px;height:22px;background:#a0a0a0;box-shadow:1px 0 0 #fff"></div>
  <!-- step back -->
  <svg class="a" style="left:869px;top:60px" width="18" height="18" viewBox="0 0 18 18">
    <path d="M1.5,7 L9,2 L9,12 Z" fill="#b8d4ee" stroke="#3a6ea8" stroke-width="1"/>
    <rect x="10" y="1.5" width="2" height="8" fill="#b8d4ee" stroke="#3a6ea8" stroke-width="0.8"/>
    <path d="M10.5,8.5 L11.7,9.6 L13.2,9.2 L13.6,10.7 L15,11.3 L14.4,12.7 L15.2,14 L13.8,14.6 L13.4,16.1 L11.9,15.8 L10.6,16.8 L9.7,15.5 L8.2,15.4 L8.4,13.9 L7.4,12.8 L8.6,11.8 L8.6,10.3 L10,10.2 Z" fill="#c8c8c8" stroke="#444" stroke-width="0.8"/>
    <circle cx="11.3" cy="12.7" r="1.5" fill="#fff" stroke="#444" stroke-width="0.7"/>
  </svg>
  <!-- run -->
  <svg class="a" style="left:891px;top:59px" width="18" height="18" viewBox="0 0 18 18">
    <defs><radialGradient id="gR2" cx="0.45" cy="0.3" r="0.75"><stop offset="0" stop-color="#e4f8b4"/><stop offset="0.6" stop-color="#8fd038"/><stop offset="1" stop-color="#5aa018"/></radialGradient></defs>
    <circle cx="9" cy="9" r="7.8" fill="url(#gR2)" stroke="#2e6a10" stroke-width="1.1"/>
    <path d="M7,5.2 L12.5,9 L7,12.8 Z" fill="#222"/>
  </svg>
  <!-- step forward -->
  <svg class="a" style="left:916px;top:60px" width="16" height="16" viewBox="0 0 16 16">
    <rect x="1.5" y="1.5" width="2.2" height="13" fill="#b8d4ee" stroke="#3a6ea8" stroke-width="0.9"/>
    <path d="M6,1.5 L15,8 L6,14.5 Z" fill="#b8d4ee" stroke="#3a6ea8" stroke-width="1"/>
  </svg>
  <!-- stop -->
  <svg class="a" style="left:937px;top:59px" width="18" height="18" viewBox="0 0 18 18">
    <circle cx="9" cy="9" r="8" fill="#a8a8a8" stroke="#9a9a9a" stroke-width="0.8"/>
    <rect x="5.8" y="5.8" width="6.4" height="6.4" fill="#8a8a8a"/>
  </svg>
  <div class="a" style="left:961px;top:59px;width:1px;height:22px;background:#a0a0a0;box-shadow:1px 0 0 #fff"></div>
  <!-- signal selector -->
  <svg class="a" style="left:969px;top:60px" width="18" height="18" viewBox="0 0 18 18">
    <rect x="1" y="1.5" width="6" height="4" fill="#f0a050" stroke="#d06010" stroke-width="0.9"/>
    <path d="M7,3.5 H10 V9 H12 M10,9 V13 H7" stroke="#555" stroke-width="0.9" fill="none"/>
    <circle cx="14" cy="9" r="2" fill="#fff" stroke="#555" stroke-width="0.8"/>
    <rect x="1" y="11" width="6" height="4" fill="#fff" stroke="#555" stroke-width="0.9"/>
    <path d="M0,7.5 H2" stroke="#555"/>
  </svg>
  <svg class="a" style="left:992px;top:66px" width="7" height="4"><path d="M0,0 H7 L3.5,4 Z" fill="#333"/></svg>
  <div class="a" style="left:1004px;top:59px;width:1px;height:22px;background:#a0a0a0;box-shadow:1px 0 0 #fff"></div>
  <!-- zoom -->
  <svg class="a" style="left:1012px;top:60px" width="18" height="18" viewBox="0 0 18 18">
    <circle cx="7" cy="7" r="5.2" fill="#fff" stroke="#222" stroke-width="1.4"/>
    <path d="M4.5,7 H9.5 M7,4.5 V9.5" stroke="#000" stroke-width="1.2"/>
    <path d="M10.8,10.8 L15.5,15.5" stroke="#222" stroke-width="2.6" stroke-linecap="round"/>
  </svg>
  <svg class="a" style="left:1035px;top:66px" width="7" height="4"><path d="M0,0 H7 L3.5,4 Z" fill="#333"/></svg>
  <!-- scale -->
  <svg class="a" style="left:1048px;top:60px" width="17" height="17" viewBox="0 0 17 17">
    <rect x="0.5" y="0.5" width="15" height="15" fill="#f6f6f6" stroke="#333"/>
    <path d="M8,2 V5 M6.5,3.5 L8,2 L9.5,3.5 M8,14 V11 M6.5,12.5 L8,14 L9.5,12.5" stroke="#333" stroke-width="0.9" fill="none"/>
  </svg>
  <svg class="a" style="left:1070px;top:66px" width="7" height="4"><path d="M0,0 H7 L3.5,4 Z" fill="#333"/></svg>
  <div class="a" style="left:1082px;top:59px;width:1px;height:22px;background:#a0a0a0;box-shadow:1px 0 0 #fff"></div>
  <!-- step icon -->
  <svg class="a" style="left:1090px;top:60px" width="16" height="16" viewBox="0 0 16 16">
    <path d="M1,14.5 H6 V8 L9,8 L7,5 L10,2 H14 L12,4 L12,8 L8,11 V14.5" stroke="#111" stroke-width="1.6" fill="#888"/>
  </svg>
  <!-- ruler -->
  <svg class="a" style="left:1114px;top:60px" width="17" height="17" viewBox="0 0 17 17">
    <rect x="0.5" y="0.5" width="15" height="15" fill="#f4f4f4" stroke="#555"/>
    <path d="M2,12 L12,2 L14.5,4.5 L4.5,14.5 Z" fill="#a8cce8" stroke="#4a7aa8" stroke-width="0.8"/>
    <path d="M5,10 L6,11 M7,8 L8,9 M9,6 L10,7 M11,4 L12,5" stroke="#4a7aa8" stroke-width="0.7"/>
  </svg>
  <svg class="a" style="left:1136px;top:66px" width="7" height="4"><path d="M0,0 H7 L3.5,4 Z" fill="#333"/></svg>
</div>

  <!-- dark panel -->
  <div class="a" style="left:2px;top:84px;width:439px;height:579px;background:#282828"></div>
  <div class="a" style="left:424px;top:86px;width:14px;height:11px;border:1px solid #d0d0d0;background:#303030"></div>
  <svg class="a" style="left:426px;top:88px" width="10" height="8"><path d="M1,1 H9 M5,7 V3 M3,5 L5,2.6 L7,5" stroke="#e8e8e8" stroke-width="1.2" fill="none"/></svg>
  <!-- status bar -->
  <div class="a" style="left:2px;top:663px;width:439px;height:1px;background:#fafafa"></div>
  <div class="a" style="left:2px;top:664px;width:439px;height:23px;background:#f0f0f0"></div>
  <div class="a" style="left:3px;top:670px;font-size:11.5px;color:#000">Ready</div>
  <div class="a" style="left:387px;top:667px;width:53px;height:18px;border:1px solid #a8a8a8;border-right-color:#fff;border-bottom-color:#fff;background:#f0f0f0"></div>
  <div class="a" style="left:390px;top:670px;font-size:11px;color:#000">T=30.000</div>
  <svg class="a" style="left:-821px;top:0" width="1269" height="695" font-size="11" fill="#acacac">
  <rect x="854.5" y="103.5" width="393" height="149" fill="#000" stroke="#bcbcbc" stroke-width="1"/>
<line x1="920.5" y1="104" x2="920.5" y2="252" stroke="#555"/>
<line x1="920.5" y1="248" x2="920.5" y2="252" stroke="#bcbcbc"/>
<line x1="920.5" y1="104" x2="920.5" y2="108" stroke="#bcbcbc"/>
<line x1="985.5" y1="104" x2="985.5" y2="252" stroke="#555"/>
<line x1="985.5" y1="248" x2="985.5" y2="252" stroke="#bcbcbc"/>
<line x1="985.5" y1="104" x2="985.5" y2="108" stroke="#bcbcbc"/>
<line x1="1051.5" y1="104" x2="1051.5" y2="252" stroke="#555"/>
<line x1="1051.5" y1="248" x2="1051.5" y2="252" stroke="#bcbcbc"/>
<line x1="1051.5" y1="104" x2="1051.5" y2="108" stroke="#bcbcbc"/>
<line x1="1116.5" y1="104" x2="1116.5" y2="252" stroke="#555"/>
<line x1="1116.5" y1="248" x2="1116.5" y2="252" stroke="#bcbcbc"/>
<line x1="1116.5" y1="104" x2="1116.5" y2="108" stroke="#bcbcbc"/>
<line x1="1182.5" y1="104" x2="1182.5" y2="252" stroke="#555"/>
<line x1="1182.5" y1="248" x2="1182.5" y2="252" stroke="#bcbcbc"/>
<line x1="1182.5" y1="104" x2="1182.5" y2="108" stroke="#bcbcbc"/>
<text x="849" y="257" text-anchor="end">0</text>
<line x1="855" y1="228.5" x2="1247" y2="228.5" stroke="#555"/>
<line x1="855" y1="228.5" x2="859" y2="228.5" stroke="#bcbcbc"/>
<line x1="1243" y1="228.5" x2="1247" y2="228.5" stroke="#bcbcbc"/>
<text x="849" y="233" text-anchor="end">20</text>
<line x1="855" y1="203.5" x2="1247" y2="203.5" stroke="#555"/>
<line x1="855" y1="203.5" x2="859" y2="203.5" stroke="#bcbcbc"/>
<line x1="1243" y1="203.5" x2="1247" y2="203.5" stroke="#bcbcbc"/>
<text x="849" y="208" text-anchor="end">40</text>
<line x1="855" y1="178.5" x2="1247" y2="178.5" stroke="#555"/>
<line x1="855" y1="178.5" x2="859" y2="178.5" stroke="#bcbcbc"/>
<line x1="1243" y1="178.5" x2="1247" y2="178.5" stroke="#bcbcbc"/>
<text x="849" y="183" text-anchor="end">60</text>
<line x1="855" y1="153.5" x2="1247" y2="153.5" stroke="#555"/>
<line x1="855" y1="153.5" x2="859" y2="153.5" stroke="#bcbcbc"/>
<line x1="1243" y1="153.5" x2="1247" y2="153.5" stroke="#bcbcbc"/>
<text x="849" y="158" text-anchor="end">80</text>
<line x1="855" y1="128.5" x2="1247" y2="128.5" stroke="#555"/>
<line x1="855" y1="128.5" x2="859" y2="128.5" stroke="#bcbcbc"/>
<line x1="1243" y1="128.5" x2="1247" y2="128.5" stroke="#bcbcbc"/>
<text x="849" y="133" text-anchor="end">100</text>
<text x="849" y="108" text-anchor="end">120</text>
<text x="854.0" y="270" text-anchor="middle">0</text>
<text x="919.5" y="270" text-anchor="middle">5</text>
<text x="985.0" y="270" text-anchor="middle">10</text>
<text x="1050.5" y="270" text-anchor="middle">15</text>
<text x="1116.0" y="270" text-anchor="middle">20</text>
<text x="1181.5" y="270" text-anchor="middle">25</text>
<text x="1247.0" y="270" text-anchor="middle">30</text>
<text x="1050.5" y="98" text-anchor="middle" fill="#a8a8a8">Throttle</text>
<polyline points="854.5,178.5 1049.5,202.5 1049.5,185.5 1050.5,185.5 1050.5,128.5 1059.5,128.5 1247.5,150.5" fill="none" stroke="#ffff00" stroke-width="1"/>
<rect x="854.5" y="296.5" width="393" height="149" fill="#000" stroke="#bcbcbc" stroke-width="1"/>
<line x1="920.5" y1="297" x2="920.5" y2="445" stroke="#555"/>
<line x1="920.5" y1="441" x2="920.5" y2="445" stroke="#bcbcbc"/>
<line x1="920.5" y1="297" x2="920.5" y2="301" stroke="#bcbcbc"/>
<line x1="985.5" y1="297" x2="985.5" y2="445" stroke="#555"/>
<line x1="985.5" y1="441" x2="985.5" y2="445" stroke="#bcbcbc"/>
<line x1="985.5" y1="297" x2="985.5" y2="301" stroke="#bcbcbc"/>
<line x1="1051.5" y1="297" x2="1051.5" y2="445" stroke="#555"/>
<line x1="1051.5" y1="441" x2="1051.5" y2="445" stroke="#bcbcbc"/>
<line x1="1051.5" y1="297" x2="1051.5" y2="301" stroke="#bcbcbc"/>
<line x1="1116.5" y1="297" x2="1116.5" y2="445" stroke="#555"/>
<line x1="1116.5" y1="441" x2="1116.5" y2="445" stroke="#bcbcbc"/>
<line x1="1116.5" y1="297" x2="1116.5" y2="301" stroke="#bcbcbc"/>
<line x1="1182.5" y1="297" x2="1182.5" y2="445" stroke="#555"/>
<line x1="1182.5" y1="441" x2="1182.5" y2="445" stroke="#bcbcbc"/>
<line x1="1182.5" y1="297" x2="1182.5" y2="301" stroke="#bcbcbc"/>
<text x="849" y="450" text-anchor="end">0</text>
<line x1="855" y1="416.5" x2="1247" y2="416.5" stroke="#555"/>
<line x1="855" y1="416.5" x2="859" y2="416.5" stroke="#bcbcbc"/>
<line x1="1243" y1="416.5" x2="1247" y2="416.5" stroke="#bcbcbc"/>
<text x="849" y="421" text-anchor="end">1000</text>
<line x1="855" y1="386.5" x2="1247" y2="386.5" stroke="#555"/>
<line x1="855" y1="386.5" x2="859" y2="386.5" stroke="#bcbcbc"/>
<line x1="1243" y1="386.5" x2="1247" y2="386.5" stroke="#bcbcbc"/>
<text x="849" y="391" text-anchor="end">2000</text>
<line x1="855" y1="356.5" x2="1247" y2="356.5" stroke="#555"/>
<line x1="855" y1="356.5" x2="859" y2="356.5" stroke="#bcbcbc"/>
<line x1="1243" y1="356.5" x2="1247" y2="356.5" stroke="#bcbcbc"/>
<text x="849" y="361" text-anchor="end">3000</text>
<line x1="855" y1="326.5" x2="1247" y2="326.5" stroke="#555"/>
<line x1="855" y1="326.5" x2="859" y2="326.5" stroke="#bcbcbc"/>
<line x1="1243" y1="326.5" x2="1247" y2="326.5" stroke="#bcbcbc"/>
<text x="849" y="331" text-anchor="end">4000</text>
<text x="849" y="301" text-anchor="end">5000</text>
<text x="854.0" y="463" text-anchor="middle">0</text>
<text x="919.5" y="463" text-anchor="middle">5</text>
<text x="985.0" y="463" text-anchor="middle">10</text>
<text x="1050.5" y="463" text-anchor="middle">15</text>
<text x="1116.0" y="463" text-anchor="middle">20</text>
<text x="1181.5" y="463" text-anchor="middle">25</text>
<text x="1247.0" y="463" text-anchor="middle">30</text>
<text x="1050.5" y="291" text-anchor="middle" fill="#a8a8a8">EngineRPM</text>
<polyline points="854.5,416.5 854.9,396.3 855.5,385.3 856.1,380.4 857.4,377.9 861.6,374.9 870.9,363.2 877.0,349.8 878.2,357.1 879.4,365.7 881.4,367.9 893.0,362.0 901.5,355.3 909.5,349.5 910.2,355.9 910.8,364.4 912.7,366.7 918.7,366.7 955.6,355.3 956.7,355.9 958.0,368.1 960.6,371.6 975.0,371.6 1011.7,370.3 1049.0,368.2 1050.3,361.4 1052.3,333.9 1054.9,329.5 1068.0,323.7 1091.6,315.0 1120.4,304.9 1122.4,304.9 1123.7,335.4 1125.7,341.1 1247.5,324.3" fill="none" stroke="#ffff00" stroke-width="1"/>
<rect x="854.5" y="489.5" width="393" height="149" fill="#000" stroke="#bcbcbc" stroke-width="1"/>
<line x1="920.5" y1="490" x2="920.5" y2="638" stroke="#555"/>
<line x1="920.5" y1="634" x2="920.5" y2="638" stroke="#bcbcbc"/>
<line x1="920.5" y1="490" x2="920.5" y2="494" stroke="#bcbcbc"/>
<line x1="985.5" y1="490" x2="985.5" y2="638" stroke="#555"/>
<line x1="985.5" y1="634" x2="985.5" y2="638" stroke="#bcbcbc"/>
<line x1="985.5" y1="490" x2="985.5" y2="494" stroke="#bcbcbc"/>
<line x1="1051.5" y1="490" x2="1051.5" y2="638" stroke="#555"/>
<line x1="1051.5" y1="634" x2="1051.5" y2="638" stroke="#bcbcbc"/>
<line x1="1051.5" y1="490" x2="1051.5" y2="494" stroke="#bcbcbc"/>
<line x1="1116.5" y1="490" x2="1116.5" y2="638" stroke="#555"/>
<line x1="1116.5" y1="634" x2="1116.5" y2="638" stroke="#bcbcbc"/>
<line x1="1116.5" y1="490" x2="1116.5" y2="494" stroke="#bcbcbc"/>
<line x1="1182.5" y1="490" x2="1182.5" y2="638" stroke="#555"/>
<line x1="1182.5" y1="634" x2="1182.5" y2="638" stroke="#bcbcbc"/>
<line x1="1182.5" y1="490" x2="1182.5" y2="494" stroke="#bcbcbc"/>
<text x="849" y="643" text-anchor="end">0</text>
<line x1="855" y1="589.5" x2="1247" y2="589.5" stroke="#555"/>
<line x1="855" y1="589.5" x2="859" y2="589.5" stroke="#bcbcbc"/>
<line x1="1243" y1="589.5" x2="1247" y2="589.5" stroke="#bcbcbc"/>
<text x="849" y="594" text-anchor="end">50</text>
<line x1="855" y1="539.5" x2="1247" y2="539.5" stroke="#555"/>
<line x1="855" y1="539.5" x2="859" y2="539.5" stroke="#bcbcbc"/>
<line x1="1243" y1="539.5" x2="1247" y2="539.5" stroke="#bcbcbc"/>
<text x="849" y="544" text-anchor="end">100</text>
<text x="849" y="494" text-anchor="end">150</text>
<text x="854.0" y="656" text-anchor="middle">0</text>
<text x="919.5" y="656" text-anchor="middle">5</text>
<text x="985.0" y="656" text-anchor="middle">10</text>
<text x="1050.5" y="656" text-anchor="middle">15</text>
<text x="1116.0" y="656" text-anchor="middle">20</text>
<text x="1181.5" y="656" text-anchor="middle">25</text>
<text x="1247.0" y="656" text-anchor="middle">30</text>
<text x="1050.5" y="484" text-anchor="middle" fill="#a8a8a8">VehicleSpeed</text>
<polyline points="854.5,639.5 855.8,637.4 857.1,635.3 858.4,633.4 859.7,631.5 861.0,629.6 862.4,627.9 863.7,626.2 865.0,624.6 866.3,623.0 867.6,621.5 868.9,620.1 870.2,618.7 871.5,617.3 872.8,616.1 874.1,614.8 875.5,613.6 876.8,612.5 878.1,611.3 879.4,610.3 880.7,609.2 882.0,608.2 883.3,607.3 884.6,606.3 885.9,605.4 887.2,604.5 888.6,603.7 889.9,602.9 891.2,602.1 892.5,601.3 893.8,600.6 895.1,599.8 896.4,599.1 897.7,598.5 899.0,597.8 900.4,597.2 901.7,596.6 903.0,595.9 904.3,595.4 905.6,594.8 906.9,594.2 908.2,593.7 909.5,593.2 910.8,592.7 912.1,592.2 913.5,591.7 914.8,591.2 916.1,590.7 917.4,590.3 918.7,589.8 920.0,589.4 921.3,589.0 922.6,588.6 923.9,588.2 925.2,587.8 926.5,587.4 927.9,587.0 929.2,586.6 930.5,586.3 931.8,585.9 933.1,585.5 934.4,585.2 935.7,584.8 937.0,584.5 938.3,584.2 939.6,583.8 941.0,583.5 942.3,583.2 943.6,582.9 944.9,582.6 946.2,582.3 947.5,582.0 948.8,581.7 950.1,581.4 951.4,581.1 952.8,580.8 954.1,580.5 955.4,580.2 956.7,580.0 958.0,579.7 959.3,579.4 960.6,579.1 961.9,578.9 963.2,578.6 964.5,578.3 965.9,578.1 967.2,577.8 968.5,577.6 969.8,577.3 971.1,577.1 972.4,576.8 973.7,576.6 975.0,576.3 976.3,576.1 977.6,575.8 979.0,575.6 980.3,575.3 981.6,575.1 982.9,574.8 984.2,574.6 985.5,574.4 986.8,574.1 988.1,573.9 989.4,573.6 990.7,573.4 992.0,573.2 993.4,572.9 994.7,572.7 996.0,572.5 997.3,572.2 998.6,572.0 999.9,571.8 1001.2,571.6 1002.5,571.3 1003.8,571.1 1005.1,570.9 1006.5,570.6 1007.8,570.4 1009.1,570.2 1010.4,570.0 1011.7,569.7 1013.0,569.5 1014.3,569.3 1015.6,569.1 1016.9,568.8 1018.2,568.6 1019.6,568.4 1020.9,568.2 1022.2,567.9 1023.5,567.7 1024.8,567.5 1026.1,567.3 1027.4,567.1 1028.7,566.8 1030.0,566.6 1031.3,566.4 1032.7,566.2 1034.0,566.0 1035.3,565.7 1036.6,565.5 1037.9,565.3 1039.2,565.1 1040.5,564.9 1041.8,564.6 1043.1,564.4 1044.5,564.2 1045.8,564.0 1047.1,563.8 1048.4,563.5 1049.7,563.3 1051.0,563.1 1057.5,562.0 1064.1,559.9 1083.8,552.0 1103.4,545.0 1120.4,539.5 1129.6,537.2 1149.2,533.5 1182.0,527.5 1214.8,521.5 1247.5,515.5" fill="none" stroke="#ffff00" stroke-width="1"/>
  </svg>
</div>
</body></html>
